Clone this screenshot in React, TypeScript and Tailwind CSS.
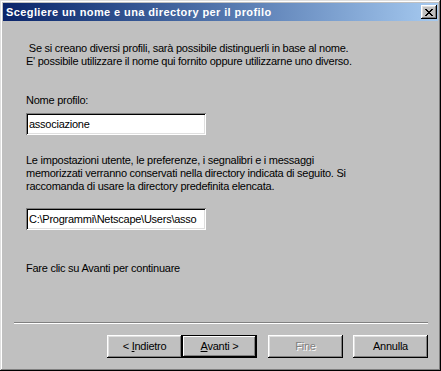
import React from 'react';

const raised =
  'shadow-[inset_-1px_-1px_#000000,inset_1px_1px_#ffffff,inset_-2px_-2px_#808080,inset_2px_2px_#dfdfdf]';
const sunken =
  'shadow-[inset_1px_1px_#808080,inset_-1px_-1px_#ffffff,inset_2px_2px_#000000,inset_-2px_-2px_#dfdfdf]';

function Btn({ children, primary, disabled }: { children: React.ReactNode; primary?: boolean; disabled?: boolean }) {
  return (
    <div
      className={`w-[75px] h-[23px] flex items-center justify-center bg-[#c0c0c0] ${
        primary
          ? 'shadow-[inset_0_0_0_1px_#000000,inset_-2px_-2px_#000000,inset_2px_2px_#ffffff,inset_-3px_-3px_#808080]'
          : raised
      } ${disabled ? 'text-[#808080] [text-shadow:1px_1px_0_#ffffff]' : 'text-black'}`}
    >
      <span>{children}</span>
    </div>
  );
}

export default function App() {
  return (
    <div className="w-[441px] h-[371px] bg-[#c0c0c0] p-[3px] shadow-[inset_-1px_-1px_#000000,inset_1px_1px_#dfdfdf,inset_-2px_-2px_#808080,inset_2px_2px_#ffffff] font-['Liberation_Sans',Arial,sans-serif] text-[11px] leading-[13px] tracking-[-0.25px] text-black">
      {/* title bar */}
      <div className="h-[18px] flex items-center justify-between bg-gradient-to-r from-[#0a246a] to-[#a6caf0] pl-[3px] pr-[1px]">
        <span className="text-white font-bold text-[11px] tracking-[0.4px]">Scegliere un nome e una directory per il profilo</span>
        <div className={`w-[16px] h-[14px] bg-[#c0c0c0] ${raised} flex items-center justify-center`}>
          <svg width="8" height="7" viewBox="0 0 8 7">
            <path d="M0 0h2v1h1v1h2V1h1V0h2v1H7v1H6v1H5v1h1v1h1v1h1v1H6V6H5V5H3v1H2v1H0V6h1V5h1V4h1V3H2V2H1V1H0z" fill="#000" />
          </svg>
        </div>
      </div>

      {/* body */}
      <div className="pl-[23px]">
        <p className="mt-[21px] whitespace-pre">{' Se si creano diversi profili, sarà possibile distinguerli in base al nome.\nE\' possibile utilizzare il nome qui fornito oppure utilizzarne uno diverso.'}</p>
        <p className="mt-[26px]">Nome profilo:</p>
        <div className={`mt-[6px] w-[180px] h-[22px] bg-white ${sunken} flex items-center px-[3px]`}>associazione</div>
        <p className="mt-[19px] whitespace-pre">
          {'Le impostazioni utente, le preferenze, i segnalibri e i messaggi\nmemorizzati verranno conservati nella directory indicata di seguito. Si\nraccomanda di usare la directory predefinita elencata.'}
        </p>
        <div className={`mt-[15px] w-[180px] h-[22px] bg-white ${sunken} flex items-center px-[3px] overflow-hidden whitespace-nowrap`}>
          C:\Programmi\Netscape\Users\asso
        </div>
        <p className="mt-[32px]">Fare clic su Avanti per continuare</p>
      </div>

      {/* separator */}
      <div className="mt-[47px] ml-[11px] w-[414px] h-[2px] border-t border-[#808080] border-b border-b-white" />

      {/* buttons */}
      <div className="mt-[11px] ml-[104px] flex">
        <Btn>
          &lt; <span className="underline">I</span>ndietro
        </Btn>
        <Btn primary>
          <span className="underline">A</span>vanti &gt;
        </Btn>
        <div className="w-[11px]" />
        <Btn disabled>Fine</Btn>
        <div className="w-[10px]" />
        <Btn>Annulla</Btn>
      </div>
    </div>
  );
}
